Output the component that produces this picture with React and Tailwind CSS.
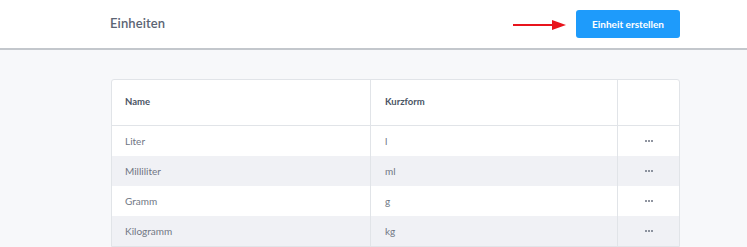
const units = [
  { name: "Liter", short: "l" },
  { name: "Milliliter", short: "ml" },
  { name: "Gramm", short: "g" },
  { name: "Kilogramm", short: "kg" },
]

const App = () => {
  return (
    <div className="min-h-screen bg-[#f7f8fa] font-['Lato',sans-serif]">
      <div className="h-[50px] bg-white border-b-2 border-[#c3c7cc] flex items-center justify-between pl-[110px] pr-[67px]">
        <h1 className="text-[13px] font-semibold text-[#5b6474] tracking-[0.1px]">Einheiten</h1>
        <div className="flex items-center">
          <svg width="54" height="12" viewBox="0 0 54 12" className="mr-[9px] mt-[2px]">
            <line x1="0" y1="6" x2="40" y2="6" stroke="#e8141c" strokeWidth="2" />
            <polygon points="39,1 53,6 39,11" fill="#e8141c" />
          </svg>
          <button className="h-[28px] w-[104px] rounded-[3px] bg-[#1e9bfb] text-white text-[10px] font-bold">
            Einheit erstellen
          </button>
        </div>
      </div>

      <div className="pt-[29px] pl-[111px] pr-[67px]">
        <div className="bg-white border border-[#e1e4e8] rounded-t-[3px] overflow-hidden">
          <div className="grid grid-cols-[258px_247px_1fr] h-[46px] border-b border-[#e1e4e8]">
            <div className="flex items-center pl-[13px] text-[9.5px] font-bold text-[#4b5565]">Name</div>
            <div className="flex items-center pl-[14px] text-[9.5px] font-bold text-[#4b5565] border-l border-[#e1e4e8]">Kurzform</div>
            <div className="border-l border-[#e1e4e8]"></div>
          </div>
          {units.map((u, i) => (
            <div
              key={u.name}
              className={`grid grid-cols-[258px_247px_1fr] h-[30px] text-[10px] text-[#707784] ${i % 2 === 1 ? "bg-[#f0f1f5]" : "bg-white"}`}
            >
              <div className="flex items-center pl-[13px]">{u.name}</div>
              <div className="flex items-center pl-[14px] border-l border-[#e1e4e8]">{u.short}</div>
              <div className="flex items-center justify-center border-l border-[#e1e4e8]">
                <span className="flex gap-[1px]">
                  <span className="w-[2px] h-[2px] rounded-full bg-[#6b7280]"></span>
                  <span className="w-[2px] h-[2px] rounded-full bg-[#6b7280]"></span>
                  <span className="w-[2px] h-[2px] rounded-full bg-[#6b7280]"></span>
                </span>
              </div>
            </div>
          ))}
        </div>
      </div>
    </div>
  )
}

export default App
